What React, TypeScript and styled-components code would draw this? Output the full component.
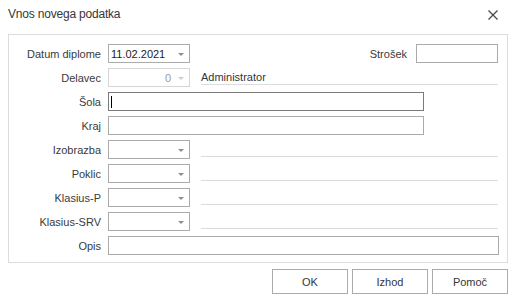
import React from "react";
import styled, { createGlobalStyle } from "styled-components";

const GlobalStyle = createGlobalStyle`
  html, body {
    margin: 0;
    padding: 0;
    background: #ffffff;
    font-family: "Liberation Sans", Arial, sans-serif;
  }
`;

const Window = styled.div`
  width: 515px;
  height: 302px;
  display: flex;
  flex-direction: column;
  background: #ffffff;
  color: #3a3a3a;
`;

const TitleBar = styled.div`
  height: 34px;
  display: flex;
  justify-content: space-between;
  align-items: flex-start;
  padding: 0 17px 0 8px;
`;

const Title = styled.span`
  font-size: 12px;
  margin-top: 7px;
  letter-spacing: -0.2px;
  color: #363636;
`;

const CloseButton = styled.div`
  margin-top: 10px;
  width: 10px;
  height: 10px;
  display: flex;
`;

const Panel = styled.div`
  margin: 0 7px 0 8px;
  border: 1px solid #dcdcdc;
  padding: 9px 8px 7px 23px;
  display: flex;
  flex-direction: column;
  gap: 5px;
`;

const Row = styled.div`
  display: flex;
  align-items: center;
  height: 19px;
`;

const Label = styled.div`
  width: 69px;
  margin-right: 7px;
  display: flex;
  justify-content: flex-end;
  white-space: nowrap;
  font-size: 11px;
  color: #3a3a3a;
`;

const SideLabel = styled.span`
  margin-left: auto;
  margin-right: 9px;
  font-size: 11px;
  color: #3a3a3a;
`;

const Box = styled.div<{ $w?: number; $grow?: boolean; $focused?: boolean; $disabled?: boolean }>`
  box-sizing: border-box;
  height: 19px;
  width: ${(p) => (p.$w ? `${p.$w}px` : "auto")};
  flex: ${(p) => (p.$grow ? "1" : "none")};
  border: 1px solid
    ${(p) => (p.$focused ? "#7a7a7a" : p.$disabled ? "#d6d6d6" : "#ababab")};
  background: #ffffff;
  display: flex;
  align-items: center;
  padding: 0 5px 0 2px;
  font-size: 11px;
  color: ${(p) => (p.$disabled ? "#9a9a9a" : "#222")};
`;

const BoxText = styled.span<{ $right?: boolean }>`
  flex: 1;
  text-align: ${(p) => (p.$right ? "right" : "left")};
  padding-right: ${(p) => (p.$right ? "7px" : "0")};
`;

const Arrow = styled.span<{ $disabled?: boolean }>`
  width: 0;
  height: 0;
  border-left: 3px solid transparent;
  border-right: 3px solid transparent;
  border-top: 3px solid ${(p) => (p.$disabled ? "#cfcfcf" : "#8f8f8f")};
  margin-top: 1px;
`;

const Caret = styled.span`
  width: 1px;
  height: 12px;
  background: #000;
`;

const Linked = styled.div`
  flex: 1;
  align-self: stretch;
  margin: 0 1px 2px 11px;
  border-bottom: 1px solid #dcdcdc;
  display: flex;
  align-items: flex-end;
  font-size: 11px;
  color: #363636;
  padding-bottom: 1px;
`;

const Footer = styled.div`
  display: flex;
  justify-content: flex-end;
  gap: 4px;
  margin: 6px 7px 0 0;
`;

const Button = styled.button`
  box-sizing: border-box;
  width: 76px;
  height: 25px;
  border: 1px solid #ababab;
  background: #ffffff;
  font-family: "Liberation Sans", Arial, sans-serif;
  font-size: 11px;
  color: #363636;
  padding: 0;
`;

function Combo({ w, value, right, disabled }: { w: number; value?: string; right?: boolean; disabled?: boolean }) {
  return (
    <Box $w={w} $disabled={disabled}>
      <BoxText $right={right}>{value}</BoxText>
      <Arrow $disabled={disabled} />
    </Box>
  );
}

const comboRows = ["Izobrazba", "Poklic", "Klasius-P", "Klasius-SRV"];

export default function App() {
  return (
    <>
      <GlobalStyle />
      <Window>
        <TitleBar>
          <Title>Vnos novega podatka</Title>
          <CloseButton>
            <svg width="10" height="10" viewBox="0 0 10 10">
              <path d="M0.5 0.5 L9.5 9.5 M9.5 0.5 L0.5 9.5" stroke="#444" strokeWidth="1.2" />
            </svg>
          </CloseButton>
        </TitleBar>
        <Panel>
          <Row>
            <Label>Datum diplome</Label>
            <Combo w={82} value="11.02.2021" />
            <SideLabel>Strošek</SideLabel>
            <Box $w={82} style={{ marginRight: 1 }} />
          </Row>
          <Row>
            <Label>Delavec</Label>
            <Combo w={82} value="0" right disabled />
            <Linked>Administrator</Linked>
          </Row>
          <Row>
            <Label>Šola</Label>
            <Box $w={316} $focused>
              <Caret />
            </Box>
          </Row>
          <Row>
            <Label>Kraj</Label>
            <Box $w={316} />
          </Row>
          {comboRows.map((name) => (
            <Row key={name}>
              <Label>{name}</Label>
              <Combo w={82} />
              <Linked />
            </Row>
          ))}
          <Row>
            <Label>Opis</Label>
            <Box $grow />
          </Row>
        </Panel>
        <Footer>
          <Button>OK</Button>
          <Button>Izhod</Button>
          <Button>Pomoč</Button>
        </Footer>
      </Window>
    </>
  );
}
